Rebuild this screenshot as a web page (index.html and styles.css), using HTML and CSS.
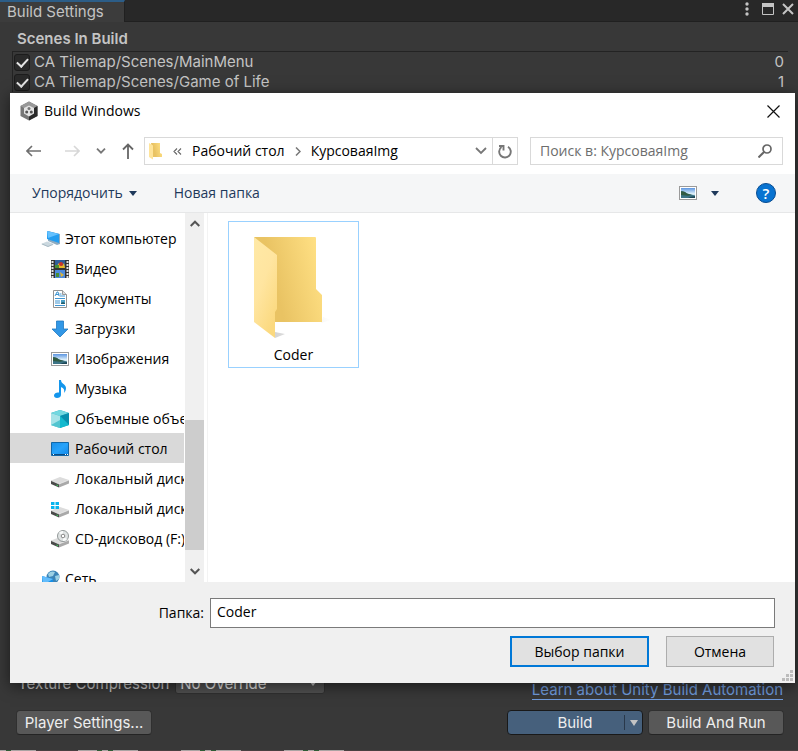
FILE: index.html
```html
<!DOCTYPE html>
<html lang="ru">
<head>
<meta charset="utf-8">
<meta name="viewport" content="width=device-width, initial-scale=1">
<title>Build Settings</title>
<link rel="stylesheet" href="styles.css">
</head>
<body>
<svg class="defs" aria-hidden="true">
  <defs>
    <linearGradient id="gFolderBack" x1="0" y1="0.6" x2="1" y2="0.3"><stop offset="0.3" stop-color="#e9c363"/><stop offset="1" stop-color="#ffe084"/></linearGradient>
    <linearGradient id="gFolderFront" x1="0" y1="0" x2="0.6" y2="1"><stop offset="0" stop-color="#ffe9a6"/><stop offset="0.5" stop-color="#ffe5a0"/><stop offset="1" stop-color="#fbd97f"/></linearGradient>
    <linearGradient id="gShadow" x1="0" y1="0" x2="1" y2="0"><stop offset="0" stop-color="#d4d4d4"/><stop offset="1" stop-color="#fff"/></linearGradient>
    <linearGradient id="gSky" x1="0" y1="0" x2="0" y2="1"><stop offset="0" stop-color="#5c95e0"/><stop offset="0.6" stop-color="#e4f4fb"/><stop offset="1" stop-color="#4a86a0"/></linearGradient>
    <linearGradient id="gBlue" x1="0" y1="0" x2="1" y2="1"><stop offset="0" stop-color="#1a8fe8"/><stop offset="0.5" stop-color="#26a3fb"/><stop offset="1" stop-color="#1286e6"/></linearGradient>
    <symbol id="picture" viewBox="0 0 18 14">
      <rect x="0.5" y="0.5" width="17" height="13" fill="#fff" stroke="#9a9a9a"/>
      <rect x="2" y="2" width="14" height="10" fill="url(#gSky)"/>
      <path d="M2 5c2 0 4 1 6 2.500l8 2V12H2z" fill="#3c7487"/>
      <path d="M2 5.500c2-.5 4 .5 6 2l5 1.500-4 .7-7-.7z" fill="#315b43"/>
      <path d="M9 12l3-1.200 4-.8v2z" fill="#1d4757"/>
    </symbol>
    <symbol id="drive" viewBox="0 0 18 18">
      <path d="M0 10.500L9 7l9 3-10 4z" fill="#dcdcdc"/>
      <path d="M0 10.500l8 3.500v3.500l-8-3.500z" fill="#4a4a4a"/>
      <path d="M8 14l10-4v3.500L8 17.500z" fill="#a9a9a9"/>
      <path d="M5.500 14.500l1.500.7v1l-1.500-.7z" fill="#39d85a"/>
      <path d="M0 10.500l8 3.500 10-4" fill="none" stroke="#f2f2f2" stroke-width=".6"/>
    </symbol>
  </defs>
</svg>

<main class="settings">
  <header class="tabbar">
    <h1 class="tab">Build Settings</h1>
    <div class="window-tools">
      <button class="bare" aria-label="Menu"><svg width="6" height="14" viewBox="0 0 6 14" fill="#c4c4c4"><circle cx="3" cy="2" r="1.700"/><circle cx="3" cy="7" r="1.700"/><circle cx="3" cy="12" r="1.700"/></svg></button>
      <button class="bare" aria-label="Maximize"><svg width="12" height="12" viewBox="0 0 12 12"><path d="M.5.5h11v11H.5z" fill="none" stroke="#c4c4c4"/><path d="M0 0h12v4H0z" fill="#c4c4c4"/></svg></button>
      <button class="bare" aria-label="Close"><svg width="12" height="12" viewBox="0 0 12 12"><path d="M1 1l10 10M11 1L1 11" stroke="#c4c4c4" stroke-width="2"/></svg></button>
    </div>
  </header>

  <section class="scenes">
    <h2 class="heading">Scenes In Build</h2>
    <ul class="scene-list">
      <li class="scene"><label><input class="tick" type="checkbox" checked>CA Tilemap/Scenes/MainMenu</label><span>0</span></li>
      <li class="scene"><label><input class="tick" type="checkbox" checked>CA Tilemap/Scenes/Game of Life</label><span>1</span></li>
    </ul>
  </section>

  <section class="options">
    <div class="compression">
      <label for="compression">Texture Compression</label>
      <select id="compression"><option>No Override</option></select>
    </div>
    <a class="learn" href="#">Learn about Unity Build Automation</a>
  </section>
  <footer class="actions">
    <button class="grey-btn">Player Settings...</button>
    <div class="build-group">
      <button class="build-btn"><span class="build-text">Build</span><span class="build-arrow"></span></button>
      <button class="grey-btn">Build And Run</button>
    </div>
  </footer>
  <div class="strip"><svg width="345" height="1" viewBox="0 0 345 1"><path d="M0 .5h36M78 .5h60M181 .5h60M284 .5h60" stroke="#aaa3a3"/><path d="M6 .5h5M97 .5h5M108 .5h5M200 .5h5M211 .5h5M303 .5h5M314 .5h5" stroke="#2f5b35"/></svg></div>
</main>

<div class="dialog" role="dialog" aria-label="Build Windows">
  <header class="titlebar">
    <svg width="18" height="20" viewBox="0 0 18 20"><path d="M9 .5l8.500 4.500v10L9 19.500.5 15V5z" fill="#777"/><path d="M9 .5l8.500 4.500L9 10 .5 5z" fill="#999"/><path d="M17.500 5v10L9 19.500V10z" fill="#292929"/><path d="M9 4.500l5 2.500v5.500l-5 3-5-3V7z" fill="#e4e4e4"/><circle cx="9" cy="7.500" r="1.500" fill="#777"/><circle cx="6.700" cy="11" r="1.500" fill="#555"/><circle cx="11.300" cy="11" r="1.500" fill="#555"/></svg>
    <h2 class="title">Build Windows</h2>
    <button class="bare" aria-label="Закрыть"><svg width="13" height="13" viewBox="0 0 13 13"><path d="M.5.5l12 12M12.500.5l-12 12" stroke="#111" stroke-width="1.200"/></svg></button>
  </header>

  <div class="navbar">
    <div class="history">
      <button class="bare" aria-label="Назад"><svg width="16" height="12" viewBox="0 0 16 12" fill="none" stroke="#6f6f6f" stroke-width="1.600"><path d="M1 6h14M6 1L1 6l5 5"/></svg></button>
      <button class="bare" aria-label="Вперёд"><svg width="16" height="12" viewBox="0 0 16 12" fill="none" stroke="#d7d7d7" stroke-width="1.600"><path d="M1 6h14M10 1l5 5-5 5"/></svg></button>
      <button class="bare" aria-label="Недавние"><svg width="10" height="6" viewBox="0 0 10 6" fill="none" stroke="#777" stroke-width="1.800"><path d="M1 .7l4 4 4-4"/></svg></button>
      <button class="bare" aria-label="Вверх"><svg width="12" height="16" viewBox="0 0 12 16" fill="none" stroke="#666" stroke-width="1.800"><path d="M6 16V1.500M1 6.500l5-5 5 5"/></svg></button>
    </div>
    <nav class="address">
      <svg width="14" height="18" viewBox="0 0 14 18"><path d="M2 1h9v10l2 1v3H4z" fill="url(#gFolderBack)"/><path d="M0 1l4 2.500v14L0 15z" fill="#ffe49a"/></svg>
      <svg width="9" height="7" viewBox="0 0 9 7" fill="none" stroke="#666" stroke-width="1.100"><path d="M4 .5l-3 3 3 3M8 .5l-3 3 3 3"/></svg>
      <a href="#">Рабочий стол</a>
      <svg width="6" height="9" viewBox="0 0 6 9" fill="none" stroke="#777" stroke-width="1.500"><path d="M1 .5l4 4-4 4"/></svg>
      <a class="current" href="#">КурсоваяImg</a>
      <button class="bare" aria-label="Список адресов"><svg width="12" height="8" viewBox="0 0 12 8" fill="none" stroke="#777" stroke-width="1.800"><path d="M1 1l5 5 5-5"/></svg></button>
      <button class="bare refresh" aria-label="Обновить"><svg width="14" height="15" viewBox="0 0 14 15" fill="none" stroke="#777" stroke-width="1.900"><path d="M10 2.800a5.800 5.800 0 1 1-6.500.3"/><path d="M1 2h4.500v4.500"/></svg></button>
    </nav>
    <div class="search">
      <input type="search" placeholder="Поиск в: КурсоваяImg" aria-label="Поиск">
      <svg width="14" height="14" viewBox="0 0 14 14" fill="none" stroke="#666" stroke-width="1.700"><circle cx="9" cy="5" r="4"/><path d="M6 8l-5.500 5.500" stroke-width="2"/></svg>
    </div>
  </div>

  <div class="toolbar">
    <button class="bare organize">Упорядочить <i class="caret"></i></button>
    <button class="bare">Новая папка</button>
    <div class="view-tools">
      <button class="bare" aria-label="Вид"><svg width="18" height="14"><use href="#picture"/></svg></button>
      <button class="bare" aria-label="Выбор вида"><i class="caret"></i></button>
      <button class="help" aria-label="Справка">?</button>
    </div>
  </div>

  <div class="content">
    <ul class="tree">
      <li class="root"><svg width="20" height="18" viewBox="0 0 20 18"><path d="M7 1l12 3v10l-3 1-9-4z" fill="#8fabc0"/><path d="M6 1l12 3v9L6 9z" fill="#239df0"/><path d="M6 1l12 3L7 8z" fill="#63c1ff"/><path d="M0 14l6-2.500 7 2.500-6 3z" fill="#cbd8df"/><path d="M1 14l6 2.500 5-2" fill="none" stroke="#8fa5b0" stroke-width=".6"/></svg>Этот компьютер</li>
      <li><svg width="18" height="18" viewBox="0 0 18 18"><path d="M0 0h18v18H0z" fill="#333"/><path d="M4 0h10v8H4z" fill="#315e9b"/><path d="M4 10h10v8H4z" fill="#4e8bdc"/><path d="M5 7l3-4 3 3 2-3 1 5H4z" fill="#e7b928"/><path d="M4 5h4v3H4zM5 13h3v4H5z" fill="#488e34"/><circle cx="10" cy="4" r="2" fill="#ce3427"/><path d="M9 12l4 3-3 2z" fill="#ddb438"/><path d="M1.500 1v17M16.500 1v17" stroke="#e2e2e2" stroke-width="2" stroke-dasharray="2 1"/></svg>Видео</li>
      <li><svg width="18" height="18" viewBox="0 0 18 18"><path d="M2.500.5h9l4 4v13h-13z" fill="#fff" stroke="#939393"/><path d="M11.500.5v4h4" fill="#ddd" stroke="#999"/><path d="M4 6l2-4h1l1 4M5 4.500h3M8.500 4h2M8.500 6H14M4 8.500h10M4 11h5M4 13h5M4 15.500h10" fill="none" stroke="#3e94d1"/><path d="M10 10h4v4h-4z" fill="#4a9fc6"/><path d="M10 13l2-1 2 1v1h-4z" fill="#235f6d"/></svg>Документы</li>
      <li><svg width="18" height="18" viewBox="0 0 18 18"><path d="M5.500 1h7v8H17l-8 8-8-8h4.500z" fill="#3197e6" stroke="#2078c0" stroke-width=".8"/></svg>Загрузки</li>
      <li><svg width="18" height="14"><use href="#picture"/></svg>Изображения</li>
      <li><svg width="18" height="18" viewBox="0 0 18 18"><path d="M8 0h2c0 4 5 4 5 8 0 2-1 4-2 5 1-4-1-5-3-6v8c0 2-2 3-4 3s-3-1-3-2.500C3 13 6 12 8 12.500z" fill="#1496ec"/></svg>Музыка</li>
      <li><svg width="18" height="18" viewBox="0 0 18 18"><path d="M0 3l9-3 9 3v12l-9 3-9-3z" fill="#17aaba"/><path d="M0 3l9-3 9 3-9 3z" fill="#72d8e0"/><path d="M0 3l9 3v12l-9-3z" fill="#a5e3e8"/><path d="M0 15l9-5v8z" fill="#52c5d0"/><path d="M9 6l9-3v12z" fill="#078fad"/><path d="M9 6l9 9-9 3z" fill="#13b9ce"/></svg>Объемные объекты</li>
      <li class="selected"><svg width="18" height="14" viewBox="0 0 18 14"><path d="M.5.5h17v13H.5z" fill="url(#gBlue)" stroke="#1167a8"/><path d="M1 12.500h16" stroke="#0b4a80"/><path d="M2 12.500h1M14 12.500h1M16 12.500h1" stroke="#fff"/></svg>Рабочий стол</li>
      <li><svg width="18" height="18"><use href="#drive"/></svg>Локальный диск (C:)</li>
      <li><svg width="18" height="18" viewBox="0 0 18 18"><use href="#drive" width="18" height="18"/><path d="M0 2h3.500v3H0zM4.500 2H8v3H4.500zM0 6h3.500v3H0zM4.500 6H8v3H4.500z" fill="#08b5ee"/></svg>Локальный диск (D:)</li>
      <li><svg width="18" height="18" viewBox="0 0 18 18"><use href="#drive" width="18" height="18"/><circle cx="12" cy="6" r="5.500" fill="#dfe3e3" stroke="#939999"/><path d="M12 6l-4-3.500A5 5 0 0 1 12 1zM12 6l4 3.500A5 5 0 0 1 12 11z" fill="#f8fafa"/><circle cx="12" cy="6" r="1.800" fill="#fff" stroke="#888"/></svg>CD-дисковод (F:)</li>
      <li class="root network"><svg width="20" height="18" viewBox="0 0 20 18"><circle cx="12" cy="7" r="6.500" fill="#3b83b6"/><path d="M7 4c2-3 5-3 7-2l-2 4-4 1zM14 6l4-1v4l-3 2z" fill="#9bd0e4"/><path d="M1 6l11 3v9L1 16z" fill="#168ee5"/><path d="M1 6l11 3-10 6z" fill="#62bcfb"/></svg>Сеть</li>
    </ul>
    <div class="scrollbar">
      <button class="bare arrow" aria-label="Прокрутить вверх"><svg width="10" height="7" viewBox="0 0 10 7" fill="none" stroke="#555" stroke-width="2"><path d="M.7 6L5 1.700 9.300 6"/></svg></button>
      <div class="space-above"></div><div class="thumb"></div><div class="space-below"></div>
      <button class="bare arrow" aria-label="Прокрутить вниз"><svg width="10" height="7" viewBox="0 0 10 7" fill="none" stroke="#555" stroke-width="2"><path d="M.7 1L5 5.300 9.300 1"/></svg></button>
    </div>
    <div class="files">
      <figure class="file">
        <svg width="80" height="106" viewBox="0 0 80 106">
          <path d="M68 87l10-3-8-3zM22 102l10-4-10-2z" fill="url(#gShadow)"/>
          <path d="M1 1h61q1 0 1 1v51l6 6v27H22z" fill="url(#gFolderBack)"/>
          <path d="M1 1l23 18v54l-2 3v26L1 86z" fill="url(#gFolderFront)"/>
        </svg>
        <figcaption>Coder</figcaption>
      </figure>
    </div>
  </div>

  <form class="picker">
    <div class="field"><label for="folder">Папка:</label><input id="folder" type="text" value="Coder"></div>
    <div class="buttons">
      <button class="choose" type="button">Выбор папки</button>
      <button class="cancel" type="button">Отмена</button>
    </div>
    <svg class="grip" width="12" height="12" viewBox="0 0 12 12" fill="#bcbcbc"><path d="M9 0h3v3H9zM9 4h3v3H9zM9 8h3v3H9zM5 4h3v3H5zM5 8h3v3H5zM1 8h3v3H1z"/></svg>
  </form>
</div>
</body>
</html>
```
FILE: styles.css
```css
* { box-sizing: border-box; }
body { margin: 0; font: 14px/22px "Open Sans", "Noto Sans", sans-serif; color: #000; }
h1, h2, ul, figure { margin: 0; padding: 0; font-size: inherit; font-weight: normal; list-style: none; }
svg { display: block; flex: none; }
button, input, select { font: inherit; color: inherit; border-radius: 0; margin: 0; }
a { color: inherit; text-decoration: none; }
.defs { position: absolute; width: 0; height: 0; }
.bare { display: flex; align-items: center; justify-content: center; padding: 0; border: 0; background: none; }

/* Build settings window */
.settings { display: flex; flex-direction: column; min-height: 100vh; background: #383838; color: #c4c4c4; font: 15px/20px Inter, sans-serif; }
.tabbar { display: flex; justify-content: space-between; height: 22px; background: #282828; border-bottom: 1px solid #202020; }
.tab { height: 22px; padding: 0 20px 0 7px; background: #3c3c3c; border-top: 2px solid #2c5d87; border-right: 1px solid #202020; }
.window-tools { display: flex; align-items: center; gap: 12px; padding: 0 4px 3px 0; }
.window-tools button:last-child { margin-left: -4px; }
.scenes { padding: 7px 10px 0 12px; }
.heading { padding: 0 5px 2px; font-weight: 600; }
.scene-list { border: 1px solid #232323; border-width: 1px 0 0 1px; }
.scene { display: flex; justify-content: space-between; height: 20px; padding: 0 4px 0 1px; }
.scene label { display: flex; align-items: center; gap: 4px; }
.tick { appearance: none; width: 16px; height: 17px; border: 1px solid #1c1c1c; border-radius: 3px; background: #2a2a2a; display: grid; place-items: center; }
.tick:checked::before { content: ""; width: 9px; height: 5px; border: solid #e4e4e4; border-width: 0 0 2px 2px; transform: translateY(-1px) rotate(-47deg); }
.options { display: flex; justify-content: space-between; align-items: flex-end; margin-top: auto; padding: 0 15px 10px 18px; }
.compression { position: relative; display: flex; align-items: center; gap: 6px; padding-bottom: 6px; }
.compression select { appearance: none; width: 150px; height: 21px; padding: 0 4px; border: 1px solid #303030; border-radius: 3px; color: #e4e4e4; background: #515151; }
.compression::after { content: ""; position: absolute; right: 8px; top: 8px; border: 4px solid transparent; border-top: 5px solid #c4c4c4; border-bottom: 0; }
.learn { color: #7baefa; border-bottom: 1px solid #7baefa; line-height: 19px; opacity: .85; }
.actions { display: flex; justify-content: space-between; padding: 0 14px 15px 16px; }
.build-group { display: flex; gap: 5px; }
.grey-btn, .build-btn { width: 136px; height: 25px; padding: 0; border: 1px solid #303030; border-bottom-color: #242424; border-radius: 4px; background: #585858; color: #eee; line-height: 20px; }
.build-btn { display: flex; align-items: center; background: #46607c; border-color: #191919; }
.build-text { flex: 1; padding-left: 18px; }
.build-arrow { display: grid; place-items: center; width: 18px; height: 15px; border-left: 1px solid #29384a; }
.build-arrow::before { content: ""; border: 4px solid transparent; border-top: 6px solid #c4c4c4; border-bottom: 0; }
.strip { height: 1px; background: #494041; }

/* Folder dialog */
.dialog { position: absolute; top: 93px; right: 3px; bottom: 68px; left: 10px; display: flex; flex-direction: column; background: #fff; box-shadow: 0 3px 14px rgba(0, 0, 0, .55); }
.titlebar { display: flex; align-items: center; height: 36px; padding: 0 15px 0 10px; }
.title { flex: 1; padding-left: 6px; }
.navbar { display: flex; align-items: center; padding: 8px 12px 9px 16px; gap: 10px; }
.history { display: flex; align-items: center; width: 108px; gap: 16px; }
.history button:first-child { margin-right: 6px; }
.address, .search { display: flex; align-items: center; height: 28px; border: 1px solid #d9d9d9; }
.address { flex: 374 1 374px; padding-left: 4px; gap: 10px; }
.current { flex: 1; }
.address .bare { align-self: stretch; width: 12px; }
.address .refresh { width: 25px; margin-left: -5px; border-left: 1px solid #d9d9d9; }
.search { flex: 253 1 253px; padding: 0 10px 0 9px; margin-left: 2px; }
.search input { flex: 1; min-width: 0; padding: 0; border: 0; outline: 0; background: none; }
.search input::placeholder { color: #6d6d6d; opacity: 1; }
.toolbar { display: flex; align-items: center; gap: 37px; height: 39px; padding: 0 19px 0 22px; color: #1e395b; background: #f5f6f7; border-bottom: 1px solid #e6e7e8; }
.caret { border: 4px solid transparent; border-top: 5px solid #1e395b; border-bottom: 0; }
.organize { gap: 6px; }
.view-tools { display: flex; align-items: center; gap: 14px; margin-left: auto; }
.help { width: 20px; height: 20px; margin-left: 23px; padding: 0; border: 1px solid #084c91; border-radius: 50%; background: #0873d1; color: #fff; font-size: 15px; font-weight: 600; line-height: 18px; }
.content { display: flex; flex: 1; min-height: 0; }
.tree { width: 175px; padding-top: 10px; overflow: hidden; white-space: nowrap; }
.tree li { display: flex; align-items: center; gap: 6px; height: 30px; padding: 1px 0 0 41px; margin-right: 1px; overflow: hidden; }
.tree .root { padding-left: 31px; gap: 4px; }
.tree .selected { background: #d9d9d9; }
.tree .network { margin-top: 10px; }
.scrollbar { display: flex; flex-direction: column; width: 19px; background: #f0f0f0; }
.arrow { height: 21px; }
.space-above { flex: 187; }
.thumb { flex: 130; background: #cdcdcd; }
.space-below { flex: 11; }
.files { flex: 1; margin-left: 3px; padding: 8px 20px; border-left: 1px solid #f3f3f3; }
.file { display: flex; flex-direction: column; align-items: center; width: 131px; height: 147px; padding-top: 14px; border: 1px solid #99d1ff; }
.file svg { margin-left: -1px; }
.file figcaption { padding-top: 2px; }
.picker { position: relative; padding: 16px 20px; background: #f0f0f0; }
.field { display: flex; align-items: center; justify-content: flex-end; gap: 6px; }
.field input { flex: 0 1 565px; min-width: 0; height: 30px; padding: 0 6px 4px; border: 1px solid #7a7a7a; background: #fff; outline: 0; }
.buttons { display: flex; justify-content: flex-end; gap: 17px; padding: 8px 1px 0 0; }
.buttons button { height: 31px; padding: 0; border: 1px solid #adadad; background: #e1e1e1; }
.buttons .choose { width: 139px; border: 2px solid #0078d7; }
.buttons .cancel { width: 108px; }
.grip { position: absolute; right: 2px; bottom: 1px; }
```
